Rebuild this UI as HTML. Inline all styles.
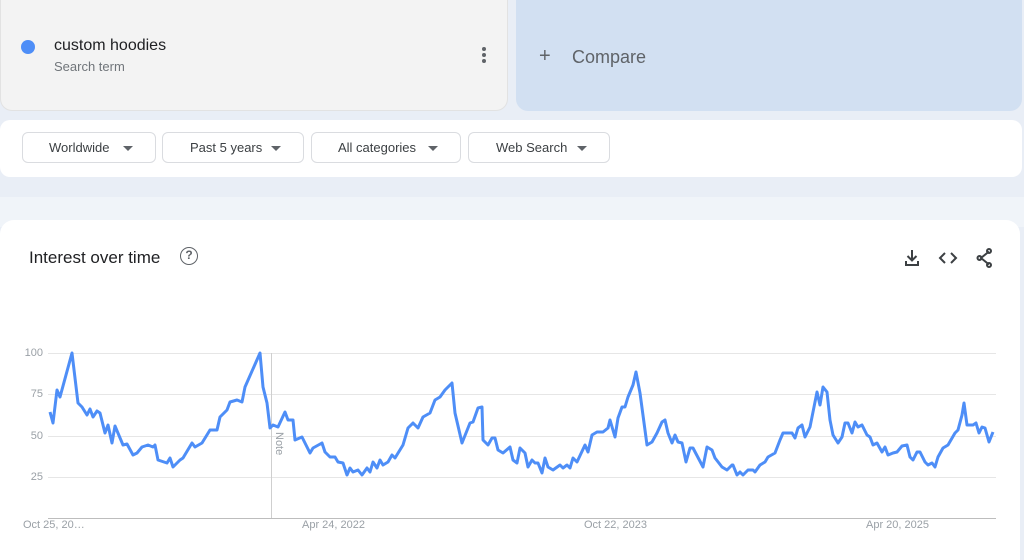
<!DOCTYPE html>
<html><head><meta charset="utf-8"><style>
*{margin:0;padding:0;box-sizing:border-box}
body{width:1024px;height:551px;overflow:hidden;background:#e9eef6;font-family:"Liberation Sans",Arial,sans-serif;position:relative}
.term{position:absolute;left:0;top:0;width:508px;height:111px;background:#f3f3f3;border-radius:0 0 12px 12px;border:1px solid #e2e2e2;border-top:none}
.dot{position:absolute;left:20px;top:40px;width:14px;height:14px;border-radius:50%;background:#4e8ef7}
.t1{position:absolute;left:53px;top:37px;font-size:16px;color:#202124}
.t2{position:absolute;left:53px;top:59px;font-size:13px;color:#70757a}
.more{position:absolute;left:481px;top:47px}
.more i{display:block;width:4px;height:4px;border-radius:50%;background:#5f6368;margin-bottom:2px}
.cmp{position:absolute;left:516px;top:0;width:506px;height:111px;background:#d2e0f2;border-radius:0 0 12px 12px}
.cmp span{position:absolute;left:23px;top:45px;font-size:20px;color:#5f6368}
.cmp b{position:absolute;left:56px;top:47px;font-size:18px;color:#5f6368;font-weight:normal}
.bar{position:absolute;left:0;top:120px;width:1022px;height:57px;background:#fff;border-radius:10px}
.chip{position:absolute;top:12px;height:31px;border:1px solid #dadce0;border-radius:6px;font-size:13px;color:#3c4043;line-height:29px}
.chip:after{content:"";position:absolute;right:22px;top:13px;border-left:5px solid transparent;border-right:5px solid transparent;border-top:5px solid #5f6368}
.band{position:absolute;left:0;top:197px;width:1024px;height:30px;background:#f0f4f9}
.card{position:absolute;left:0;top:220px;width:1020px;height:340px;background:#fff;border-radius:14px 14px 0 0}
.title{position:absolute;left:29px;top:248px;font-size:17px;color:#202124}
.q{position:absolute;left:180px;top:247px;width:18px;height:18px;border:1.6px solid #5f6368;border-radius:50%;font-size:12px;color:#5f6368;text-align:center;line-height:15px;font-weight:bold}
.yl{position:absolute;font-size:11px;color:#9aa0a6;text-align:right;width:22px;left:21px}
.xl{position:absolute;top:519px;font-size:11px;color:#9aa0a6}
</style></head><body>
<div class="term"><div class="dot"></div><div class="t1">custom hoodies</div><div class="t2">Search term</div><div class="more"><i></i><i></i><i></i></div></div>
<div class="cmp"><span>+</span><b>Compare</b></div>
<div class="bar">
<div class="chip" style="left:22px;width:134px;padding-left:26px">Worldwide</div>
<div class="chip" style="left:162px;width:142px;padding-left:27px">Past 5 years</div>
<div class="chip" style="left:311px;width:150px;padding-left:26px">All categories</div>
<div class="chip" style="left:468px;width:142px;padding-left:27px">Web Search</div>
</div>
<div class="band"></div>
<div class="card"></div>
<div class="title">Interest over time</div>
<div class="q">?</div>
<svg style="position:absolute;left:900px;top:246px" width="100" height="24" viewBox="0 0 100 24">
<g fill="none" stroke="#3c4043" stroke-width="2">
<path d="M12 4v10M7.5 10l4.5 4.5 4.5-4.5M6 15v4h12v-4"/>
<path d="M45 7l-5 5 5 5M51 7l5 5-5 5"/>
<path d="M89 5.5l-8 6.5 8 6.5"/>
<circle cx="89" cy="5" r="2"/><circle cx="79.5" cy="12" r="2"/><circle cx="89" cy="19" r="2"/>
</g>
</svg>
<svg style="position:absolute;left:0;top:0" width="1024" height="551">
<g stroke="#e6e6e6" stroke-width="1"><line x1="48" y1="353.5" x2="996" y2="353.5"/><line x1="48" y1="394.5" x2="996" y2="394.5"/><line x1="48" y1="436.5" x2="996" y2="436.5"/><line x1="48" y1="477.5" x2="996" y2="477.5"/></g>
<line x1="48" y1="518.5" x2="996" y2="518.5" stroke="#bdbdbd"/>
<line x1="271.5" y1="353" x2="271.5" y2="518" stroke="#cfcfcf"/>
<text x="0" y="0" transform="translate(276,432) rotate(90)" font-size="11" fill="#9aa0a6" font-family="Liberation Sans">Note</text>
<polyline fill="none" stroke="#4e8ef7" stroke-width="3" stroke-linejoin="round" points="50,412 53,423 57,390 60,397 72,353 78,403 82,407 87,415 90,409 93,417 97,411 100,413 105,433 108,425 112,443 115,426 123,445 127,444 133,455 137,453 142,447 148,445 153,447 155,445 158,460 167,463 170,458 173,467 180,460 183,458 192,443 195,447 202,443 210,430 217,430 220,417 227,410 230,402 237,400 242,402 245,387 260,353 263,387 267,403 270,428 273,425 278,427 285,412 288,420 293,420 295,440 302,437 310,453 313,448 322,443 325,452 330,457 335,457 338,462 343,463 347,475 350,468 353,472 358,470 362,475 367,468 370,472 373,462 377,468 380,460 383,465 388,462 392,455 395,458 403,445 408,428 413,423 418,428 423,417 430,413 435,400 440,397 445,390 452,383 455,413 462,443 470,423 473,422 478,408 482,407 483,440 488,445 492,438 495,438 498,450 503,453 510,447 513,460 517,463 520,448 525,453 528,467 532,460 535,463 538,463 542,473 545,458 548,467 553,470 560,465 563,468 567,465 570,468 573,458 577,462 585,445 588,452 592,435 597,432 603,432 608,428 610,420 615,437 618,418 622,407 625,407 628,397 633,385 636,372 640,393 647,445 652,442 657,433 662,422 665,420 668,433 672,443 675,435 678,442 682,443 686,462 690,448 693,448 703,467 707,447 712,450 715,458 722,467 727,470 732,465 733,465 737,475 740,472 743,475 748,470 753,470 755,472 760,465 765,462 768,457 775,453 780,440 783,433 792,433 795,438 798,428 802,425 805,437 810,427 817,392 820,405 823,387 827,392 830,420 833,435 838,443 842,437 845,423 848,423 852,433 855,422 858,427 862,425 867,435 870,437 873,445 877,443 882,452 885,447 888,455 893,453 897,452 902,446 907,445 910,457 913,460 917,452 920,452 925,462 928,465 932,463 935,467 938,457 943,448 948,445 955,433 958,430 962,415 964,403 967,425 973,425 976,423 979,433 982,427 985,428 989,442 993,432"/>
</svg>
<div class="yl" style="top:347px">100</div>
<div class="yl" style="top:388px">75</div>
<div class="yl" style="top:430px">50</div>
<div class="yl" style="top:471px">25</div>
<div class="xl" style="left:23px">Oct 25, 20…</div>
<div class="xl" style="left:302px">Apr 24, 2022</div>
<div class="xl" style="left:584px">Oct 22, 2023</div>
<div class="xl" style="left:866px">Apr 20, 2025</div>
</body></html>
